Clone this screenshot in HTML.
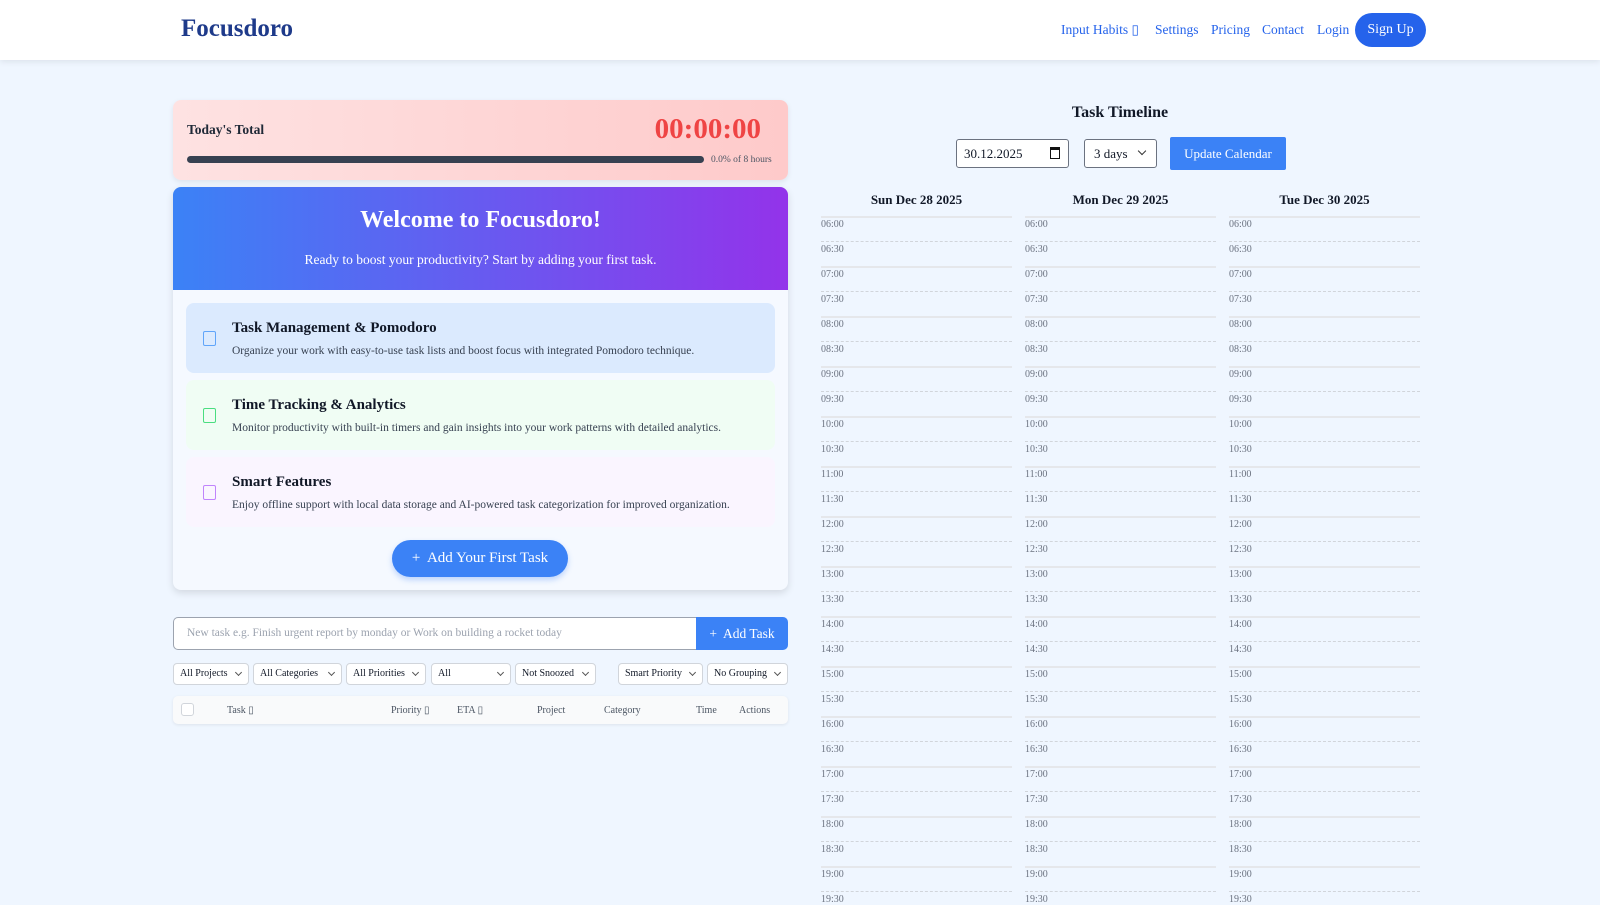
<!DOCTYPE html>
<html><head><meta charset="utf-8"><style>
*{box-sizing:border-box;margin:0;padding:0}
body{width:1600px;height:900px;overflow:hidden;background:#eff6ff;font-family:"Liberation Serif",serif;color:#111827;position:relative}
.a{position:absolute}
header{position:absolute;left:0;top:0;width:1600px;height:60px;background:#fff;box-shadow:0 2px 6px rgba(0,0,0,.08)}
.logo{left:181px;top:15px;font-size:25px;font-weight:bold;color:#1e3a8a}
.nav{top:22px;font-size:13.5px;color:#2563eb}
.su{left:1355px;top:13px;width:71px;height:34px;border-radius:17px;background:#2563eb;color:#fff;font-size:14px;text-align:center;line-height:34px}
.timer{left:173px;top:100px;width:615px;height:80px;border-radius:8px;background:linear-gradient(90deg,#fee2e2,#fecaca);box-shadow:0 2px 6px rgba(0,0,0,.08)}
.wel{left:173px;top:187px;width:615px;height:403px;border-radius:8px;background:#f5f9ff;box-shadow:0 3px 8px rgba(0,0,0,.12);overflow:hidden}
.wh{left:0;top:0;width:615px;height:103px;background:linear-gradient(90deg,#3b82f6,#9333ea);color:#fff;text-align:center}
.fc{left:13px;width:589px;height:70px;border-radius:8px}
.fc .ic{position:absolute;left:17px;top:28px;width:13px;height:15px;border:1.5px solid;border-radius:2px}
.fc .t{position:absolute;left:46px;top:17px;font-size:15px;font-weight:bold}
.fc .d{position:absolute;left:46px;top:42px;font-size:11.5px;color:#374151}
.sel{top:663px;height:22px;border:1px solid #d1d5db;border-radius:4px;background:#fff;font-size:10px;line-height:20px;padding-left:6px}
.sel:after{content:"";position:absolute;right:7px;top:6px;width:4px;height:4px;border-right:1px solid #555;border-bottom:1px solid #555;transform:rotate(45deg)}
.th{top:705px;font-size:10px;color:#4b5563}
.dh{top:192px;font-size:13px;font-weight:bold;width:191px;text-align:center}
.ln{height:0}
.s{border-top:2px solid #e5e7eb}
.dsh{border-top:1px dashed #d1d5db}
.lb{font-size:10px;color:#6b7280}
</style></head><body>
<header>
<div class="a logo">Focusdoro</div>
<div class="a nav" style="left:1061px">Input Habits ▯</div>
<div class="a nav" style="left:1155px">Settings</div>
<div class="a nav" style="left:1211px">Pricing</div>
<div class="a nav" style="left:1262px">Contact</div>
<div class="a nav" style="left:1317px">Login</div>
<div class="a su">Sign Up</div>
</header>

<div class="a timer">
<div class="a" style="left:14px;top:22px;font-size:13.5px;font-weight:bold;color:#1f2937">Today's Total</div>
<div class="a" style="right:27px;top:13px;font-size:29px;font-weight:bold;color:#ef4444">00:00:00</div>
<div class="a" style="left:14px;top:56px;width:517px;height:7px;border-radius:4px;background:#374151"></div>
<div class="a" style="left:538px;top:55px;font-size:9.5px;color:#4b5563">0.0% of 8 hours</div>
</div>

<div class="a wel">
<div class="a wh">
<div style="margin-top:20px;font-size:24px;font-weight:bold">Welcome to Focusdoro!</div>
<div style="margin-top:18px;font-size:13.5px">Ready to boost your productivity? Start by adding your first task.</div>
</div>
<div class="a fc" style="top:116px;background:#dbeafe"><div class="ic" style="border-color:#60a5fa"></div><div class="t">Task Management &amp; Pomodoro</div><div class="d">Organize your work with easy-to-use task lists and boost focus with integrated Pomodoro technique.</div></div>
<div class="a fc" style="top:193px;background:#f0fdf4"><div class="ic" style="border-color:#4ade80"></div><div class="t">Time Tracking &amp; Analytics</div><div class="d">Monitor productivity with built-in timers and gain insights into your work patterns with detailed analytics.</div></div>
<div class="a fc" style="top:270px;background:#faf5ff"><div class="ic" style="border-color:#c084fc"></div><div class="t">Smart Features</div><div class="d">Enjoy offline support with local data storage and AI-powered task categorization for improved organization.</div></div>
<div class="a" style="left:219px;top:353px;width:176px;height:37px;border-radius:19px;background:#3b82f6;color:#fff;font-size:15px;text-align:center;line-height:37px;box-shadow:0 3px 6px rgba(59,130,246,.3)">+&nbsp; Add Your First Task</div>
</div>

<div class="a" style="left:173px;top:617px;width:524px;height:33px;border:1px solid #9ca3af;border-right:none;border-radius:5px 0 0 5px;background:#fff;font-size:11.5px;color:#9ca3af;line-height:31px;padding-left:13px">New task e.g. Finish urgent report by monday or Work on building a rocket today</div>
<div class="a" style="left:696px;top:617px;width:92px;height:33px;border-radius:0 5px 5px 0;background:#3b82f6;color:#fff;font-size:13.5px;text-align:center;line-height:33px">+&nbsp; Add Task</div>

<div class="a sel" style="left:173px;width:76px">All Projects</div>
<div class="a sel" style="left:253px;width:89px">All Categories</div>
<div class="a sel" style="left:346px;width:80px">All Priorities</div>
<div class="a sel" style="left:431px;width:80px">All</div>
<div class="a sel" style="left:515px;width:81px">Not Snoozed</div>
<div class="a sel" style="left:618px;width:85px">Smart Priority</div>
<div class="a sel" style="left:707px;width:81px">No Grouping</div>

<div class="a" style="left:173px;top:696px;width:615px;height:28px;border-radius:5px;background:#f9fafb;box-shadow:0 1px 3px rgba(0,0,0,.08)"></div>
<div class="a" style="left:181px;top:703px;width:13px;height:13px;border:1px solid #d1d5db;border-radius:3px;background:#fff"></div>
<div class="a th" style="left:227px">Task ▯</div>
<div class="a th" style="left:391px">Priority ▯</div>
<div class="a th" style="left:457px">ETA ▯</div>
<div class="a th" style="left:537px">Project</div>
<div class="a th" style="left:604px">Category</div>
<div class="a th" style="left:696px">Time</div>
<div class="a th" style="left:739px">Actions</div>

<div class="a" style="left:1020px;top:104px;width:200px;text-align:center;font-size:16px;font-weight:bold">Task Timeline</div>
<div class="a" style="left:956px;top:139px;width:113px;height:29px;border:1px solid #6b7280;border-radius:3px;background:#fff;font-size:13px;line-height:27px;padding-left:7px">30.12.2025<span style="position:absolute;right:8px;top:7px;width:10px;height:12px;border:1.5px solid #111;border-top-width:3px"></span></div>
<div class="a" style="left:1084px;top:139px;width:73px;height:29px;border:1px solid #6b7280;border-radius:3px;background:#fff;font-size:13px;line-height:27px;padding-left:9px">3 days<span style="position:absolute;right:11px;top:8px;width:6px;height:6px;border-right:1px solid #333;border-bottom:1px solid #333;transform:rotate(45deg)"></span></div>
<div class="a" style="left:1170px;top:137px;width:116px;height:33px;border-radius:2px;background:#3b82f6;color:#fff;font-size:13px;text-align:center;line-height:33px">Update Calendar</div>

<div class="a dh" style="left:821px">Sun Dec 28 2025</div>
<div class="a dh" style="left:1025px">Mon Dec 29 2025</div>
<div class="a dh" style="left:1229px">Tue Dec 30 2025</div>

<div id="tl"></div>
<script>
var h='',xs=[821,1025,1229];
for(var i=0;i<28;i++){var y=216+i*25,hr=6+Math.floor(i/2),t=(hr<10?'0':'')+hr+':'+(i%2?'30':'00');
for(var c=0;c<3;c++){h+='<div class="a ln '+(i%2?'dsh':'s')+'" style="left:'+xs[c]+'px;top:'+y+'px;width:191px"></div><div class="a lb" style="left:'+xs[c]+'px;top:'+(y+3)+'px">'+t+'</div>';}}
document.getElementById('tl').innerHTML=h;
</script>
</body></html>
